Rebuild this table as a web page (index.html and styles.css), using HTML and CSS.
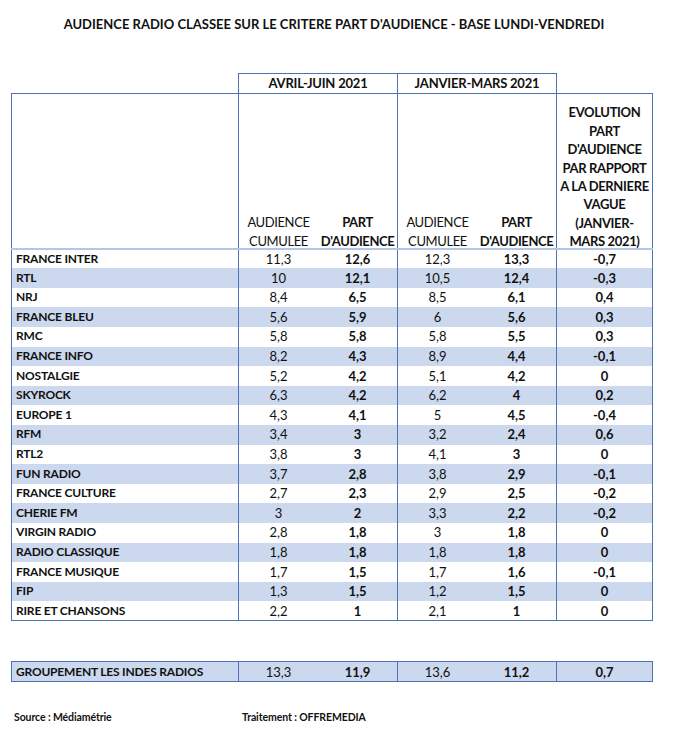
FILE: index.html
```html
<!DOCTYPE html>
<html lang="fr">
<head>
<meta charset="utf-8">
<title>Audience radio</title>
<link rel="stylesheet" href="styles.css">
</head>
<body>
<div class="page">
  <h1 class="title">AUDIENCE RADIO CLASSEE SUR LE CRITERE PART D'AUDIENCE - BASE LUNDI-VENDREDI</h1>
  <table class="grid">
    <colgroup>
      <col class="c-label"><col class="c-sub"><col class="c-sub"><col class="c-sub"><col class="c-sub"><col class="c-evol">
    </colgroup>
    <thead>
      <tr class="periods">
        <th class="blank"></th>
        <th colspan="2" class="period">AVRIL-JUIN 2021</th>
        <th colspan="2" class="period">JANVIER-MARS 2021</th>
        <th class="blank"></th>
      </tr>
      <tr class="heads">
        <th class="gl"></th>
        <th class="gl aud"><span class="hd">AUDIENCE<br>CUMULEE</span></th>
        <th class="part"><span class="hd">PART<br>D'AUDIENCE</span></th>
        <th class="gl aud"><span class="hd">AUDIENCE<br>CUMULEE</span></th>
        <th class="part"><span class="hd">PART<br>D'AUDIENCE</span></th>
        <th class="gl gr evol"><span class="hd">EVOLUTION<br>PART<br>D'AUDIENCE<br>PAR RAPPORT<br>A LA DERNIERE<br>VAGUE<br>(JANVIER-<br>MARS 2021)</span></th>
      </tr>
    </thead>
    <tbody>
      <tr><td class="gl name">FRANCE INTER</td><td class="gl num">11,3</td><td class="num b">12,6</td><td class="gl num">12,3</td><td class="num b">13,3</td><td class="gl gr num b">-0,7</td></tr>
      <tr class="alt"><td class="gl name">RTL</td><td class="gl num">10</td><td class="num b">12,1</td><td class="gl num">10,5</td><td class="num b">12,4</td><td class="gl gr num b">-0,3</td></tr>
      <tr><td class="gl name">NRJ</td><td class="gl num">8,4</td><td class="num b">6,5</td><td class="gl num">8,5</td><td class="num b">6,1</td><td class="gl gr num b">0,4</td></tr>
      <tr class="alt"><td class="gl name">FRANCE BLEU</td><td class="gl num">5,6</td><td class="num b">5,9</td><td class="gl num">6</td><td class="num b">5,6</td><td class="gl gr num b">0,3</td></tr>
      <tr><td class="gl name">RMC</td><td class="gl num">5,8</td><td class="num b">5,8</td><td class="gl num">5,8</td><td class="num b">5,5</td><td class="gl gr num b">0,3</td></tr>
      <tr class="alt"><td class="gl name">FRANCE INFO</td><td class="gl num">8,2</td><td class="num b">4,3</td><td class="gl num">8,9</td><td class="num b">4,4</td><td class="gl gr num b">-0,1</td></tr>
      <tr><td class="gl name">NOSTALGIE</td><td class="gl num">5,2</td><td class="num b">4,2</td><td class="gl num">5,1</td><td class="num b">4,2</td><td class="gl gr num b">0</td></tr>
      <tr class="alt"><td class="gl name">SKYROCK</td><td class="gl num">6,3</td><td class="num b">4,2</td><td class="gl num">6,2</td><td class="num b">4</td><td class="gl gr num b">0,2</td></tr>
      <tr><td class="gl name">EUROPE 1</td><td class="gl num">4,3</td><td class="num b">4,1</td><td class="gl num">5</td><td class="num b">4,5</td><td class="gl gr num b">-0,4</td></tr>
      <tr class="alt"><td class="gl name">RFM</td><td class="gl num">3,4</td><td class="num b">3</td><td class="gl num">3,2</td><td class="num b">2,4</td><td class="gl gr num b">0,6</td></tr>
      <tr><td class="gl name">RTL2</td><td class="gl num">3,8</td><td class="num b">3</td><td class="gl num">4,1</td><td class="num b">3</td><td class="gl gr num b">0</td></tr>
      <tr class="alt"><td class="gl name">FUN RADIO</td><td class="gl num">3,7</td><td class="num b">2,8</td><td class="gl num">3,8</td><td class="num b">2,9</td><td class="gl gr num b">-0,1</td></tr>
      <tr><td class="gl name">FRANCE CULTURE</td><td class="gl num">2,7</td><td class="num b">2,3</td><td class="gl num">2,9</td><td class="num b">2,5</td><td class="gl gr num b">-0,2</td></tr>
      <tr class="alt"><td class="gl name">CHERIE FM</td><td class="gl num">3</td><td class="num b">2</td><td class="gl num">3,3</td><td class="num b">2,2</td><td class="gl gr num b">-0,2</td></tr>
      <tr><td class="gl name">VIRGIN RADIO</td><td class="gl num">2,8</td><td class="num b">1,8</td><td class="gl num">3</td><td class="num b">1,8</td><td class="gl gr num b">0</td></tr>
      <tr class="alt"><td class="gl name">RADIO CLASSIQUE</td><td class="gl num">1,8</td><td class="num b">1,8</td><td class="gl num">1,8</td><td class="num b">1,8</td><td class="gl gr num b">0</td></tr>
      <tr><td class="gl name">FRANCE MUSIQUE</td><td class="gl num">1,7</td><td class="num b">1,5</td><td class="gl num">1,7</td><td class="num b">1,6</td><td class="gl gr num b">-0,1</td></tr>
      <tr class="alt"><td class="gl name">FIP</td><td class="gl num">1,3</td><td class="num b">1,5</td><td class="gl num">1,2</td><td class="num b">1,5</td><td class="gl gr num b">0</td></tr>
      <tr class="last"><td class="gl name">RIRE ET CHANSONS</td><td class="gl num">2,2</td><td class="num b">1</td><td class="gl num">2,1</td><td class="num b">1</td><td class="gl gr num b">0</td></tr>
    </tbody>
  </table>

  <table class="grid total">
    <colgroup>
      <col class="c-label"><col class="c-sub"><col class="c-sub"><col class="c-sub"><col class="c-sub"><col class="c-evol">
    </colgroup>
    <tbody>
      <tr class="alt boxed"><td class="gl name">GROUPEMENT LES INDES RADIOS</td><td class="gl num">13,3</td><td class="num b">11,9</td><td class="gl num">13,6</td><td class="num b">11,2</td><td class="gl gr num b">0,7</td></tr>
    </tbody>
  </table>

  <footer class="foot">
    <span class="src">Source : Médiamétrie</span>
    <span class="trt">Traitement : OFFREMEDIA</span>
  </footer>
</div>
</body>
</html>
```

FILE: styles.css
```css
html, body {
  margin: 0;
  padding: 0;
  background: #ffffff;
}

.page {
  width: 680px;
  height: 749px;
  font-family: Lato, "Open Sans", "Liberation Sans", sans-serif;
  color: #111;
  font-size: 13px;
}

.title {
  margin: 0;
  padding: 16px 0 0 0;
  width: 668px;
  text-align: center;
  font-size: 13px;
  font-weight: 700;
  line-height: 16px;
  height: 57px;
}

.grid {
  border-collapse: collapse;
  table-layout: fixed;
  width: 641px;
  margin-left: 11px;
}

.c-label { width: 227px; }
.c-sub { width: 79.5px; }
.c-evol { width: 96px; }

.grid th,
.grid td {
  padding: 0;
  font-size: 13px;
  line-height: 18.6px;
  white-space: nowrap;
}

.periods th {
  height: 18px;
  font-weight: 700;
  letter-spacing: -0.2px;
  text-align: center;
  vertical-align: middle;
}

.periods .period {
  border: 1px solid #4f72b6;
  border-bottom: none;
}

.periods .blank {
  border: none;
}

.grid .heads th {
  height: 154px;
  vertical-align: bottom;
  text-align: center;
  border-top: 1px solid #4f72b6;
  border-bottom: 2px solid #b4c6e7;
  font-weight: 400;
  letter-spacing: -0.4px;
}

.hd {
  display: block;
  margin-bottom: -3px;
}

.grid .heads .part,
.grid .heads .evol {
  font-weight: 700;
}

.grid .heads .evol {
  line-height: 18.4px;
  letter-spacing: -0.35px;
}

.gl { border-left: 1px solid #4f72b6; }
.gr { border-right: 1px solid #4f72b6; }

tbody tr { height: 19.6px; }

tbody td {
  vertical-align: middle;
}

.alt td { background: #cbd8ee; }

.grid .name {
  font-weight: 700;
  font-size: 12px;
  letter-spacing: -0.2px;
  padding-left: 4px;
  text-align: left;
}

.num { text-align: center; }
.b { font-weight: 700; }

.last td { border-bottom: 1px solid #4f72b6; }

.total {
  margin-top: 40px;
}

.boxed td {
  border-top: 1px solid #4f72b6;
  border-bottom: 1px solid #4f72b6;
  height: 19px;
}

.foot {
  display: flex;
  padding: 29px 0 0 14px;
  font-size: 10.5px;
  font-weight: 700;
  letter-spacing: -0.1px;
}

.src { width: 228px; }
```
